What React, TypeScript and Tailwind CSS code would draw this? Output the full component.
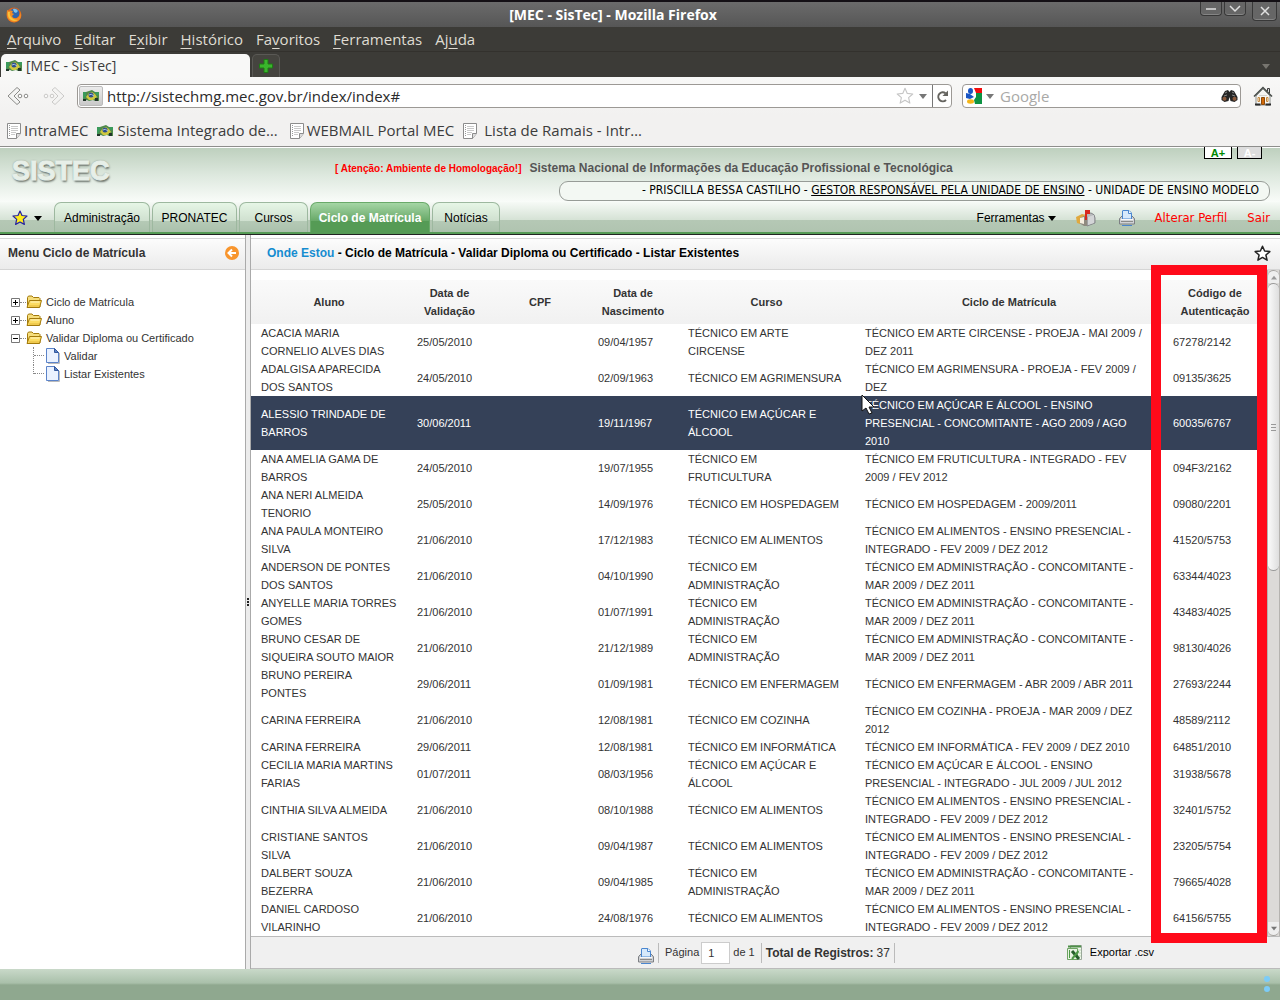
import React from "react";

const rows = [
  ["ACACIA MARIA CORNELIO ALVES DIAS", "25/05/2010", "09/04/1957", "TÉCNICO EM ARTE CIRCENSE", "TÉCNICO EM ARTE CIRCENSE - PROEJA - MAI 2009 / DEZ 2011", "67278/2142"],
  ["ADALGISA APARECIDA DOS SANTOS", "24/05/2010", "02/09/1963", "TÉCNICO EM AGRIMENSURA", "TÉCNICO EM AGRIMENSURA - PROEJA - FEV 2009 / DEZ", "09135/3625"],
  ["ALESSIO TRINDADE DE BARROS", "30/06/2011", "19/11/1967", "TÉCNICO EM AÇÚCAR E ÁLCOOL", "TÉCNICO EM AÇÚCAR E ÁLCOOL - ENSINO PRESENCIAL - CONCOMITANTE - AGO 2009 / AGO 2010", "60035/6767"],
  ["ANA AMELIA GAMA DE BARROS", "24/05/2010", "19/07/1955", "TÉCNICO EM FRUTICULTURA", "TÉCNICO EM FRUTICULTURA - INTEGRADO - FEV 2009 / FEV 2012", "094F3/2162"],
  ["ANA NERI ALMEIDA TENORIO", "25/05/2010", "14/09/1976", "TÉCNICO EM HOSPEDAGEM", "TÉCNICO EM HOSPEDAGEM - 2009/2011", "09080/2201"],
  ["ANA PAULA MONTEIRO SILVA", "21/06/2010", "17/12/1983", "TÉCNICO EM ALIMENTOS", "TÉCNICO EM ALIMENTOS - ENSINO PRESENCIAL - INTEGRADO - FEV 2009 / DEZ 2012", "41520/5753"],
  ["ANDERSON DE PONTES DOS SANTOS", "21/06/2010", "04/10/1990", "TÉCNICO EM ADMINISTRAÇÃO", "TÉCNICO EM ADMINISTRAÇÃO - CONCOMITANTE - MAR 2009 / DEZ 2011", "63344/4023"],
  ["ANYELLE MARIA TORRES GOMES", "21/06/2010", "01/07/1991", "TÉCNICO EM ADMINISTRAÇÃO", "TÉCNICO EM ADMINISTRAÇÃO - CONCOMITANTE - MAR 2009 / DEZ 2011", "43483/4025"],
  ["BRUNO CESAR DE SIQUEIRA SOUTO MAIOR", "21/06/2010", "21/12/1989", "TÉCNICO EM ADMINISTRAÇÃO", "TÉCNICO EM ADMINISTRAÇÃO - CONCOMITANTE - MAR 2009 / DEZ 2011", "98130/4026"],
  ["BRUNO PEREIRA PONTES", "29/06/2011", "01/09/1981", "TÉCNICO EM ENFERMAGEM", "TÉCNICO EM ENFERMAGEM - ABR 2009 / ABR 2011", "27693/2244"],
  ["CARINA FERREIRA", "21/06/2010", "12/08/1981", "TÉCNICO EM COZINHA", "TÉCNICO EM COZINHA - PROEJA - MAR 2009 / DEZ 2012", "48589/2112"],
  ["CARINA FERREIRA", "29/06/2011", "12/08/1981", "TÉCNICO EM INFORMÁTICA", "TÉCNICO EM INFORMÁTICA - FEV 2009 / DEZ 2010", "64851/2010"],
  ["CECILIA MARIA MARTINS FARIAS", "01/07/2011", "08/03/1956", "TÉCNICO EM AÇÚCAR E ÁLCOOL", "TÉCNICO EM AÇÚCAR E ÁLCOOL - ENSINO PRESENCIAL - INTEGRADO - JUL 2009 / JUL 2012", "31938/5678"],
  ["CINTHIA SILVA ALMEIDA", "21/06/2010", "08/10/1988", "TÉCNICO EM ALIMENTOS", "TÉCNICO EM ALIMENTOS - ENSINO PRESENCIAL - INTEGRADO - FEV 2009 / DEZ 2012", "32401/5752"],
  ["CRISTIANE SANTOS SILVA", "21/06/2010", "09/04/1987", "TÉCNICO EM ALIMENTOS", "TÉCNICO EM ALIMENTOS - ENSINO PRESENCIAL - INTEGRADO - FEV 2009 / DEZ 2012", "23205/5754"],
  ["DALBERT SOUZA BEZERRA", "21/06/2010", "09/04/1985", "TÉCNICO EM ADMINISTRAÇÃO", "TÉCNICO EM ADMINISTRAÇÃO - CONCOMITANTE - MAR 2009 / DEZ 2011", "79665/4028"],
  ["DANIEL CARDOSO VILARINHO", "21/06/2010", "24/08/1976", "TÉCNICO EM ALIMENTOS", "TÉCNICO EM ALIMENTOS - ENSINO PRESENCIAL - INTEGRADO - FEV 2009 / DEZ 2012", "64156/5755"],
];

const menus = [
  ["", "A", "rquivo"],
  ["", "E", "ditar"],
  ["E", "x", "ibir"],
  ["", "H", "istórico"],
  ["Fa", "v", "oritos"],
  ["", "F", "erramentas"],
  ["Aj", "u", "da"],
];

const FlagIcon = () => (
  <svg width="16" height="12" viewBox="0 0 16 12" className="shrink-0">
    <path d="M0 2h3l3-1 3-1 3 2h4v9h-4l-2-1-4 1-2-1-3 1H0z" fill="#4f8a4a" />
    <path d="M0 2h3v4l-3 4zM12 2h4v3h-3z" fill="#3b9a5b" />
    <path d="M3 7l3-4 3-1 3 2 2 3-4 3-4 0z" fill="#cfc83f" />
    <circle cx="8" cy="5" r="2.500" fill="#2c4f8f" />
    <path d="M6 5q2-2 5 1" stroke="#a9c0dd" strokeWidth="1" fill="none" />
    <path d="M12 8h3v3h-3zM0 9h3v2H0z" fill="#22352a" />
  </svg>
);

const PageIcon = () => (
  <svg width="14" height="16" viewBox="0 0 14 16" className="shrink-0">
    <path d="M.5.500h13v10l-4 5h-9z" fill="#fff" stroke="#8c8c8c" />
    <path d="M9.500 15.500v-5h4" fill="#ddd" stroke="#8c8c8c" />
    <path d="M4 3.500h7M4 5.500h7M4 7.500h7M4 9.500h5M4 11.500h4" stroke="#c9c9c9" />
    <path d="M2.500 2v12" stroke="#999" strokeDasharray="1 1" />
  </svg>
);

const FirefoxIcon = () => (
  <svg width="16" height="16" viewBox="0 0 16 16">
    <circle cx="8" cy="8" r="7.500" fill="#e0661a" />
    <circle cx="8.500" cy="6.500" r="5" fill="#2f66ad" />
    <path d="M7 2q3-1 5 2l-2 2-2-1z" fill="#7cc4ee" />
    <path d="M1 3l2 1q2-1 4 0L6 6l2 1-2 2q1 3 5 2 3-1 3-6 2 4 0 7-3 4-7 3-5-1-6-6-.5-3 0-6z" fill="#f08a24" />
    <path d="M2 5q-1 5 3 8 4 2 7 0-4 0-6-2-3-3-2-6z" fill="#f9c33c" />
  </svg>
);

const NavArrow = ({ forward = false }) => (
  <svg width="22" height="20" viewBox="0 0 22 20" className={forward ? "rotate-180 opacity-40" : ""}>
    <path d="M1 10l9-8.500 3 2.500-6 6 6 6-3 2.500z" fill="#f4f4f3" stroke="#8b8b88" strokeLinejoin="round" />
    <circle cx="13" cy="10" r="1.800" fill="#fff" stroke="#8b8b88" />
    <circle cx="19" cy="10" r="1.800" fill="#fff" stroke="#8b8b88" />
  </svg>
);

const Caret = ({ className = "" }) => (
  <svg width="8" height="5" viewBox="0 0 8 5" className={className}>
    <path d="M0 0h8L4 5z" fill="currentColor" />
  </svg>
);

const StarOutline = ({ size, color, weight }: { size: number; color: string; weight: number }) => (
  <svg width={size} height={size} viewBox="0 0 16 16">
    <path
      d="M8 1.200l2 4.500 4.900.5-3.700 3.200 1.100 4.900L8 11.700l-4.300 2.600 1.100-4.900L1.100 6.200 6 5.700z"
      fill="#fff"
      stroke={color}
      strokeWidth={weight}
      strokeLinejoin="round"
    />
  </svg>
);

const GoogleIcon = () => (
  <svg width="16" height="16" viewBox="0 0 16 16">
    <path d="M0 0h16v16H0z" fill="#fff" />
    <path d="M8 0h8v5H10z" fill="#f20d0d" />
    <path d="M10 5h6v11H9l-1-4 2-3z" fill="#0d9343" />
    <path d="M0 5l4 1 4 3-4 2-4-1z" fill="#1a56c4" />
    <ellipse cx="4.500" cy="3" rx="2.500" ry="3" fill="#1a56c4" />
    <ellipse cx="4.500" cy="13.500" rx="3.500" ry="2.200" fill="#f5b619" />
  </svg>
);

const Binoculars = () => (
  <svg width="17" height="12" viewBox="0 0 17 12">
    <path d="M4 1l3-1 1.500 2L10 0l3 1 3.500 6v3l-3 2-4-1-1-4-1 4-4 1-3-2V7z" fill="#262626" />
    <circle cx="3.500" cy="8.800" r="2" fill="#8b5a3c" />
    <circle cx="13.500" cy="8.800" r="2" fill="#8b5a3c" />
    <path d="M4 3l2-1M11 2l2 1M3 6l3-1M11 5l3 1" stroke="#888" />
  </svg>
);

const HomeIcon = () => (
  <svg width="20" height="20" viewBox="0 0 20 20">
    <path d="M3 10l7-7 7 7v9H3z" fill="#f6f6f4" stroke="#8f9390" />
    <path d="M6 9.500h8" stroke="#d4d4d0" />
    <path d="M14.500 5V2.500h2V7" stroke="#3c3c3c" fill="#ddd" />
    <path d="M1 10.500L10 1.500l9 9" stroke="#454a47" strokeWidth="1.500" fill="none" />
    <path d="M8.500 11.500h3v7h-3z" fill="#d26808" stroke="#8a4a0c" />
    <path d="M5 11.500h1.500v4H5zM13.500 11.500H15v4h-1.500z" fill="#fff" stroke="#c88a3c" />
    <path d="M2 18.500h5.500M12.500 18.500H18" stroke="#2b2b2b" strokeWidth="2" />
  </svg>
);

const YellowStar = () => (
  <svg width="16" height="16" viewBox="0 0 16 16">
    <path d="M8 1l2 4.500 5 .5-3.700 3.400 1.100 5L8 12l-4.400 2.400 1.100-5L1 6l5-.5z" fill="#ffec1a" stroke="#2623a3" strokeWidth="1.200" strokeLinejoin="round" />
  </svg>
);

const MailIcon = () => (
  <svg width="20" height="18" viewBox="0 0 20 18">
    <path d="M9 5l6-1q4 1 4 5v5l-8 3V8z" fill="#b9bbbd" stroke="#85878a" />
    <path d="M12 8l6-2v8l-6 2z" fill="#d3d5d7" />
    <path d="M3 8l5-2 3 3v8l-3 0-5-3z" fill="#8f8a80" />
    <path d="M0 8l6-3 4 1-6 3v6l-3-1z" fill="#e0a93f" />
    <path d="M4 9l4-1v7l-4-1z" fill="#f6efe0" />
    <path d="M9 1h5v4h-3v6H9z" fill="#d8281e" />
  </svg>
);

const PrinterIcon = () => (
  <svg width="16" height="16" viewBox="0 0 16 16">
    <path d="M1 8l2-2h10l2 2 .5 1v5H.5V9z" fill="#d0d2d5" stroke="#7c7f83" />
    <path d="M3.500 9V1q0-.5.5-.5h6L12.500 3v6z" fill="#d6e9fb" stroke="#4a86cf" />
    <path d="M9.500.500V3.500h3" fill="#fff" stroke="#4a86cf" />
    <path d="M2 9.500h12" stroke="#f7f7f7" />
    <path d="M2 11.500h12" stroke="#8a8a8a" />
    <path d="M3 15.500h10" stroke="#4a86cf" />
  </svg>
);

const FolderIcon = () => (
  <svg width="16" height="14" viewBox="0 0 16 14">
    <path d="M1.500 12V2.500l1-1.500H6l1.500 1.500H13l1 1V12z" fill="#f6de7d" stroke="#a37a0c" />
    <path d="M1 12.500L3.500 5.500H15.500L13.500 12.500z" fill="#fbdb62" stroke="#a37a0c" strokeLinejoin="round" />
    <path d="M4.500 7h9" stroke="#fff5c4" />
    <path d="M3 11h10" stroke="#e4b83a" />
  </svg>
);

const DocIcon = () => (
  <svg width="14" height="16" viewBox="0 0 14 16">
    <path d="M2 15.500h11.500V5" stroke="#bbb" fill="none" />
    <path d="M.5.500h8l4 4v10H.5z" fill="#eaf2ff" stroke="#5b83c9" />
    <path d="M8.500.500v4h4z" fill="#5b83c9" stroke="#34599c" />
  </svg>
);

const ExcelIcon = () => (
  <svg width="16" height="16" viewBox="0 0 16 16">
    <path d="M3.500.500h11v14h-11z" fill="#f2f8ef" stroke="#9aa89a" />
    <path d="M1 1.500h13" stroke="#4e8f48" strokeWidth="2" />
    <path d="M11 5h3M11 8h3M11 11h3" stroke="#b9d6b0" />
    <path d="M.5 3.500h10v11H.5z" fill="#e9f4e4" stroke="#6ea463" />
    <path d="M5 6l7 8" stroke="#245f2a" strokeWidth="3" />
    <path d="M11.500 6L5 14" stroke="#4f9a48" strokeWidth="2" />
    <path d="M2.500 5v8" stroke="#4f9a48" />
  </svg>
);

const ToggleBox = ({ open = false }) => (
  <svg width="9" height="9" viewBox="0 0 9 9">
    <path d="M.5.500h8v8h-8z" fill="#fff" stroke="#777" />
    <path d={open ? "M2 4.500h5" : "M2 4.500h5M4.500 2v5"} stroke="#000" />
  </svg>
);

const FolderRow = ({ label, open = false }: { label: string; open?: boolean }) => (
  <li className="flex h-[18px] items-center">
    <button aria-label={label} className="flex">
      <ToggleBox open={open} />
    </button>
    <span className="w-[6px] border-t border-dotted border-[#888]" />
    <FolderIcon />
    <a href="#" className="ml-1">
      {label}
    </a>
  </li>
);

const WindowButton = ({ label, d, size }: { label: string; d: string; size: string }) => (
  <button aria-label={label} className={`flex items-center justify-center rounded-b border border-t-0 border-[#383838] bg-[#666] shadow-[inset_0_-1px_0_#858585] ${size}`}>
    <svg width="12" height="10" viewBox="0 0 12 10">
      <path d={d} stroke="#e0e0e0" strokeWidth="1.500" fill="none" />
    </svg>
  </button>
);

const Browser = () => (
  <header className="font-['Open_Sans','Noto_Sans',sans-serif] text-[15px] text-[#3c3c3c]">
    <div className="relative flex h-[27px] items-center border-t-2 border-[#141015] bg-linear-to-b from-[#6b6b6b] to-[#565656] pr-[76px] pl-[6px]">
      <FirefoxIcon />
      <h1 className="flex-1 text-center text-[14px] font-bold text-white">[MEC - SisTec] - Mozilla Firefox</h1>
      <div className="absolute top-0 right-[3px] flex gap-[2px]">
        <WindowButton label="Minimizar" d="M1 5h10" size="h-[14px] w-[22px]" />
        <WindowButton label="Maximizar" d="M1 2l5 5 5-5" size="h-[14px] w-[22px]" />
        <WindowButton label="Fechar" d="M2 1l8 8M10 1l-8 8" size="ml-1 h-[19px] w-[25px]" />
      </div>
    </div>
    <nav className="flex h-[25px] items-center gap-[13px] border-b border-[#33312d] bg-[#3c3b37] px-[7px] text-[#dfdbd2]">
      {menus.map(([before, key, after]) => (
        <button key={before + key + after}>
          {before}
          <span className="underline underline-offset-[3px]">{key}</span>
          {after}
        </button>
      ))}
    </nav>
    <div className="flex h-[25px] items-end bg-[#3c3b37] pl-px">
      <button className="flex h-[23px] w-[249px] items-center gap-1 rounded-t-[5px] bg-[#f8f8f7] px-[5px] text-[14px]">
        <FlagIcon />
        [MEC - SisTec]
      </button>
      <button aria-label="Nova aba" className="ml-[2px] flex h-[23px] w-[28px] items-center justify-center rounded-t-[5px] border border-b-0 border-[#5a5955] bg-[#45443f]">
        <svg width="14" height="14" viewBox="0 0 14 14">
          <path d="M5 .5h4V5h4.500v4H9v4.500H5V9H.5V5H5z" fill="#3ab52c" stroke="#1e7a14" />
        </svg>
      </button>
      <Caret className="mr-[10px] mb-2 ml-auto text-[#77756f]" />
    </div>
    <div className="flex h-[38px] items-center bg-linear-to-b from-[#f8f8f7] to-[#f2f1f0] pr-[7px] pl-[7px]">
      <button aria-label="Voltar">
        <NavArrow />
      </button>
      <button aria-label="Avançar" className="ml-[14px]">
        <NavArrow forward />
      </button>
      <div className="ml-3 flex h-[24px] flex-1 items-center rounded-[4px] border border-[#9c9995] bg-white">
        <span className="ml-px flex h-[20px] w-[24px] items-center justify-center rounded-[2px] border border-[#bbb] bg-linear-to-b from-[#ececec] to-[#c9c9c9]">
          <FlagIcon />
        </span>
        <input aria-label="Endereço" defaultValue="http://sistechmg.mec.gov.br/index/index#" className="ml-[4px] min-w-0 flex-1 text-[#2b2b2b] outline-none" />
        <StarOutline size={18} color="#c6c6c6" weight={1} />
        <Caret className="mx-[5px] text-[#777]" />
        <button aria-label="Recarregar" className="flex h-full w-[19px] items-center justify-center border-l border-[#777]">
          <svg width="13" height="13" viewBox="0 0 13 13">
            <path d="M9.500 3.200A4.500 4.500 0 1 0 10 10" stroke="#666560" strokeWidth="2" fill="none" />
            <path d="M12 .5V6H6.500z" fill="#666560" />
          </svg>
        </button>
      </div>
      <div className="ml-[10px] flex h-[24px] w-[279px] items-center rounded-[4px] border border-[#9c9995] bg-white pr-[2px] pl-[3px]">
        <GoogleIcon />
        <Caret className="mx-[4px] text-[#777]" />
        <input aria-label="Pesquisar" placeholder="Google" className="ml-[2px] min-w-0 flex-1 outline-none placeholder:text-[#a9a9a7]" />
        <Binoculars />
      </div>
      <button aria-label="Página inicial" className="ml-[12px]">
        <HomeIcon />
      </button>
    </div>
    <nav className="flex h-[32px] items-center border-b border-[#8e8e8c] bg-[#f2f1f0] pl-[7px]">
      <a href="#" className="flex items-center gap-[3px]">
        <PageIcon />
        IntraMEC
      </a>
      <a href="#" className="ml-[9px] flex items-center gap-1">
        <FlagIcon />
        Sistema Integrado de…
      </a>
      <a href="#" className="ml-[12px] flex items-center gap-[3px]">
        <PageIcon />
        WEBMAIL Portal MEC
      </a>
      <a href="#" className="ml-[9px] flex items-center gap-[7px]">
        <PageIcon />
        Lista de Ramais - Intr…
      </a>
    </nav>
  </header>
);

const tabs = [
  { label: "Administração", width: "w-[96px]" },
  { label: "PRONATEC", width: "w-[85px]" },
  { label: "Cursos", width: "w-[69px]" },
  { label: "Ciclo de Matrícula", width: "w-[120px]", active: true },
  { label: "Notícias", width: "w-[68px]" },
];

const SiteHeader = () => (
  <div className="relative border-b border-[#222]">
    <div className="flex h-[55px] justify-between border-t border-white bg-linear-to-b from-[#bed0be] via-[#dde8de] to-[#f9fcf9] pr-[10px] pl-[12px]">
      <div className="pt-[7px] font-['Liberation_Sans',sans-serif] text-[27px] leading-[32px] font-bold text-[#e7efe8] [-webkit-text-stroke:1px_#e7efe8] [text-shadow:1px_2px_2px_#6d756e,0_0_2px_#6d756e]">SISTEC</div>
      <div className="flex w-[935px] flex-col">
        <p className="mt-[12px] flex items-baseline gap-[8px] text-[12px] leading-[16px] font-bold text-[#555]">
          <span className="text-[10px] text-[#f00]">[ Atenção: Ambiente de Homologação!]</span>
          Sistema Nacional de Informações da Educação Profissional e Tecnológica
        </p>
        <p className="mt-[4px] h-[20px] w-[711px] self-end rounded-[9px] border border-[#979c97] bg-[#f3f8f3] pr-[10px] text-right font-['DejaVu_Sans_Condensed','DejaVu_Sans',sans-serif] text-[12px] leading-[17px] text-black">
          - PRISCILLA BESSA CASTILHO -{" "}
          <a href="#" className="underline">
            GESTOR RESPONSÁVEL PELA UNIDADE DE ENSINO
          </a>{" "}
          - UNIDADE DE ENSINO MODELO
        </p>
      </div>
    </div>
    <div className="flex h-[32px] items-end justify-between border-b-2 border-[#559b55] bg-[linear-gradient(to_bottom,#f6faf6,#d5e2d5_18px,#b5c8b5_18px,#b0c4b0)] pr-[10px] text-[12px] text-black">
      <nav className="flex items-end gap-[2px]">
        <button aria-label="Atalhos" className="flex h-[28px] w-[52px] items-center gap-[6px] pl-[12px]">
          <YellowStar />
          <Caret />
        </button>
        {tabs.map((tab) => (
          <a
            key={tab.label}
            href="#"
            className={`flex h-[30px] items-center justify-center rounded-t-[7px] border border-b-0 ${tab.width} ${
              tab.active
                ? "border-[#6aaa6a] bg-[linear-gradient(to_bottom,#a5d6a5,#67a867_18px,#559b55_18px)] font-bold text-white"
                : "border-[#9db89f] bg-[linear-gradient(to_bottom,#e6f6e6,#cfe0cf_18px,#b5cab6_18px,#abc1ac)]"
            }`}
          >
            {tab.label}
          </a>
        ))}
      </nav>
      <div className="flex h-[28px] items-center">
        <button className="flex items-center gap-[3px]">
          Ferramentas
          <Caret />
        </button>
        <a href="#" aria-label="Mensagens" className="ml-5">
          <MailIcon />
        </a>
        <a href="#" aria-label="Imprimir" className="ml-[23px]">
          <PrinterIcon />
        </a>
        <div className="ml-5 flex gap-5 font-['DejaVu_Sans_Condensed','DejaVu_Sans',sans-serif] text-[13px] text-[#f00]">
          <a href="#">Alterar Perfil</a>
          <a href="#">Sair</a>
        </div>
      </div>
    </div>
    <div className="absolute top-0 right-[18px] flex gap-[5px] text-[11px] leading-[10px] font-bold">
      <button className="h-[12px] w-[28px] border border-t-0 border-black bg-white text-[#080]">A+</button>
      <button className="h-[12px] w-[25px] border border-t-0 border-black bg-[#ddd] text-white">A-</button>
    </div>
  </div>
);

const Sidebar = () => (
  <aside className="w-[245px] shrink-0 text-[11px]">
    <div className="mt-[3px] flex h-[32px] items-center justify-between border-y border-[#d5d5d5] bg-linear-to-b from-[#fcfcfc] to-[#ebebeb] pr-[6px] pb-[2px] pl-2">
      <h2 className="text-[12px] font-bold">Menu Ciclo de Matrícula</h2>
      <button aria-label="Recolher menu">
        <svg width="14" height="14" viewBox="0 0 14 14">
          <circle cx="7" cy="7" r="7" fill="#f8952d" />
          <path d="M11 7H4M7 3.500L3.500 7 7 10.500" stroke="#fff" strokeWidth="2" fill="none" />
        </svg>
      </button>
    </div>
    <ul className="pt-[23px] pl-[11px]">
      <FolderRow label="Ciclo de Matrícula" />
      <FolderRow label="Aluno" />
      <FolderRow label="Validar Diploma ou Certificado" open />
      {["Validar", "Listar Existentes"].map((label, i) => (
        <li key={label} className="ml-[22px] flex h-[18px] items-center">
          <span className={`w-[11px] self-start border-l border-dotted border-[#888] ${i === 0 ? "h-[18px]" : "h-[9px]"}`}>
            <span className="block h-[9px] border-b border-dotted border-[#888]" />
          </span>
          <span className="ml-[2px]">
            <DocIcon />
          </span>
          <a href="#" className="ml-[4px]">
            {label}
          </a>
        </li>
      ))}
    </ul>
  </aside>
);

const Scrollbar = () => (
  <div className="flex w-[13px] shrink-0 flex-col border-x border-[#b5b3b0] bg-[#dcdad8]">
    <button aria-label="Rolar para cima" className="flex h-[13px] items-center justify-center rounded-t-full border-t border-[#a5a3a0] bg-[#eee]">
      <Caret className="w-[6px] rotate-180 text-[#999]" />
    </button>
    <div className="flex h-[288px] flex-col items-center justify-center gap-[2px] rounded-full border-y border-[#999] bg-linear-to-r from-[#fbfbfb] to-[#dedede]">
      <span className="h-px w-[5px] bg-[#999]" />
      <span className="h-px w-[5px] bg-[#999]" />
      <span className="h-px w-[5px] bg-[#999]" />
    </div>
    <button aria-label="Rolar para baixo" className="mt-auto flex h-[14px] items-center justify-center rounded-b-full border-b border-[#a5a3a0] bg-[#eee]">
      <Caret className="w-[6px] text-[#777]" />
    </button>
  </div>
);

const StudentTable = () => (
  <table className="w-full table-fixed border-collapse text-left leading-[18px]">
    <colgroup>
      <col className="w-[156px]" />
      <col className="w-[85px]" />
      <col className="w-[96px]" />
      <col className="w-[90px]" />
      <col className="w-[177px]" />
      <col />
      <col className="w-[104px]" />
    </colgroup>
    <thead>
      <tr className="h-[44px] bg-linear-to-b from-[#fafafa] to-[#f1f1f1] text-center">
        {["Aluno", "Data de Validação", "CPF", "Data de Nascimento", "Curso", "Ciclo de Matrícula", "Código de Autenticação"].map((head) => (
          <th key={head} className="px-[10px] py-[4px] font-bold">
            {head}
          </th>
        ))}
      </tr>
    </thead>
    <tbody>
      {rows.map(([aluno, validacao, nascimento, curso, ciclo, codigo], i) => (
        <tr key={codigo} className={i === 2 ? "bg-[#354158] text-white" : ""}>
          <td className="px-[10px]">{aluno}</td>
          <td className="px-[10px]">{validacao}</td>
          <td />
          <td className="px-[10px]">{nascimento}</td>
          <td className="pr-3 pl-[10px]">{curso}</td>
          <td className="pr-5 pl-[10px]">{ciclo}</td>
          <td className="px-[10px]">{codigo}</td>
        </tr>
      ))}
    </tbody>
  </table>
);

const Pager = () => (
  <footer className="flex h-[33px] items-center border-y border-[#bbb] bg-[#f0f0f0] pl-[387px] text-[11px]">
    <button aria-label="Imprimir lista" className="mt-[6px]">
      <PrinterIcon />
    </button>
    <label htmlFor="pagina" className="ml-[4px] flex h-[20px] items-center border-l border-[#bbb] pl-[6px]">
      Página
    </label>
    <input id="pagina" defaultValue="1" className="ml-[2px] h-[22px] w-[29px] border border-[#ccc] bg-white pl-[6px]" />
    <span className="ml-[3px]">de 1</span>
    <p className="ml-[6px] flex h-[20px] items-center gap-[3px] border-x border-[#bbb] px-[4px] text-[12px]">
      <b>Total de Registros:</b> 37
    </p>
    <button className="mr-[126px] ml-auto flex items-center gap-[7px] text-black">
      <ExcelIcon />
      Exportar .csv
    </button>
  </footer>
);

const App = () => {
  return (
    <div className="flex min-h-screen flex-col bg-white font-['Liberation_Sans',Arial,sans-serif] text-[#333]">
      <Browser />
      <SiteHeader />
      <main className="flex flex-1">
        <Sidebar />
        <div className="flex w-[6px] shrink-0 items-center border-x border-[#aaa] bg-[#ececec]">
          <span className="mx-auto h-[8px] border-l-2 border-dotted border-[#222]" />
        </div>
        <section className="flex min-w-0 flex-1 flex-col text-[11px]">
          <div className="mt-[3px] flex h-[32px] items-center justify-between border-y border-[#d5d5d5] bg-linear-to-b from-[#fcfcfc] to-[#ebebeb] pr-[9px] pb-[2px] pl-4">
            <h2 className="text-[12px] font-bold text-black">
              <a href="#" className="text-[#168cd0]">
                Onde Estou
              </a>{" "}
              - Ciclo de Matrícula - Validar Diploma ou Certificado - Listar Existentes
            </h2>
            <button aria-label="Adicionar aos atalhos">
              <StarOutline size={17} color="#222" weight={1.4} />
            </button>
          </div>
          <div className="relative flex flex-1">
            <div className="flex-1 pt-[10px]">
              <StudentTable />
            </div>
            <Scrollbar />
            {/* highlight around the Código de Autenticação column */}
            <div className="pointer-events-none absolute -top-[5px] right-[13px] -bottom-[7px] w-[116px] border-[10px] border-[#ff0a1a]" />
            <svg width="14" height="22" viewBox="0 0 14 22" className="absolute top-[124px] left-[610px]">
              <path d="M1 1v16l4-3 3 6 3-1-3-6h5z" fill="#fff" stroke="#111" />
            </svg>
          </div>
          <Pager />
        </section>
      </main>
      <div className="flex h-[31px] justify-end bg-[linear-gradient(to_bottom,#c9d9c9,#a9c0aa_14px,#8fa88f_16px)] pt-[7px] pr-[10px]">
        <div className="flex flex-col gap-[4px]">
          <span className="size-[6px] rounded-full bg-[#7cccf8]" />
          <span className="size-[6px] rounded-full bg-[#7cccf8]" />
        </div>
      </div>
    </div>
  );
};

export default App;
